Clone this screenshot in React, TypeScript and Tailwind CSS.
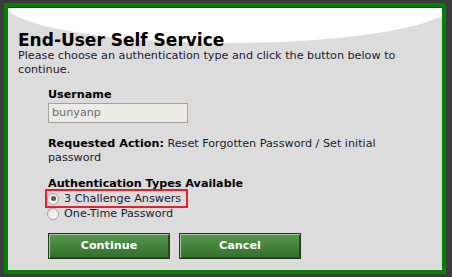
import React from 'react';

const font = { fontFamily: '"DejaVu Sans", Verdana, sans-serif' };

const Radio: React.FC<{ checked?: boolean; label: string }> = ({ checked, label }) => (
    <label className="flex items-center h-[15px] leading-[15px]">
        <span className="ml-[-1px] w-[12px] h-[12px] rounded-full border border-[#a2a2a2] bg-gradient-to-br from-[#e4e4e4] to-[#fafafa] flex items-center justify-center">
            {checked && <span className="w-[5px] h-[5px] rounded-full bg-[#5a5a5a]" />}
        </span>
        <span className="ml-[5px] text-[11.2px] text-[#1a1a2e]">{label}</span>
    </label>
);

const GreenButton: React.FC<{ label: string }> = ({ label }) => (
    <button className="w-[122px] h-[26px] border border-[#1d3b1b] bg-gradient-to-b from-[#5a9552] via-[#44833d] to-[#336f2d] shadow-[inset_1px_1px_0_#a6c9a1,inset_-1px_-1px_0_#24501f] text-white font-bold text-[11.2px] leading-[24px] text-center">
        {label}
    </button>
);

export default function App() {
    return (
        <div className="w-[452px] h-[277px] bg-[#3b3b3b] overflow-hidden pt-[3px] pl-[4px]" style={font}>
            <div className="relative w-[442px] h-[271px] border-4 border-[#058005] bg-[#dcdcdc] overflow-hidden">
                {/* white swoosh at the top */}
                <svg className="absolute top-0 left-0" width="434" height="60" viewBox="0 0 434 60">
                    <ellipse cx="221" cy="-4" rx="225" ry="40" fill="#ffffff" />
                    <rect x="0" y="0" width="434" height="1" fill="#1b2f6b" />
                </svg>

                <div className="relative pl-[10px] pr-[10px] pt-[24px] text-[#1a1a2e]">
                    <h1 className="text-[17px] leading-[19px] font-bold text-black">End-User Self Service</h1>
                    <p className="text-[11.2px] leading-[14px] mt-[-1px]">
                        Please choose an authentication type and click the button below to continue.
                    </p>

                    <div className="pl-[30px]">
                        <div className="mt-[11px] text-[11.2px] leading-[14px] font-bold text-black">Username</div>
                        <div className="mt-[1px] w-[140px] h-[20px] border border-[#a3a3a3] bg-[#ecebe5] pl-[3px] text-[11.2px] leading-[18px] text-[#6d6d6d]">
                            bunyanp
                        </div>

                        <div className="mt-[14px] text-[11.2px] leading-[14px]">
                            <b className="text-black">Requested Action:</b>{' '}Reset Forgotten Password / Set initial password
                        </div>

                        <div className="mt-[12px] text-[11.2px] leading-[14px] font-bold text-black">Authentication Types Available</div>
                        <div className="relative">
                            <div className="absolute left-[-3px] top-[-2px] w-[143px] h-[19px] border-2 border-[#e3202c]" />
                            <Radio checked label="3 Challenge Answers" />
                            <Radio label="One-Time Password" />
                        </div>

                        <div className="mt-[12px] flex gap-[9px]">
                            <GreenButton label="Continue" />
                            <GreenButton label="Cancel" />
                        </div>
                    </div>
                </div>
            </div>
        </div>
    );
}
